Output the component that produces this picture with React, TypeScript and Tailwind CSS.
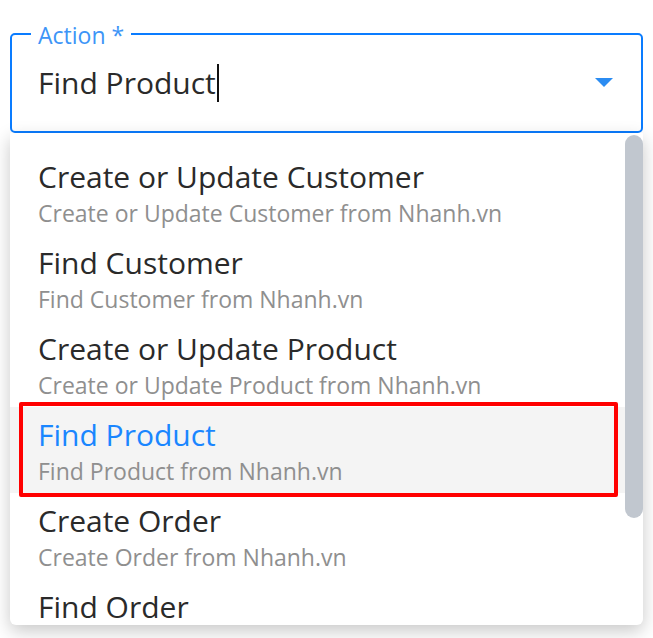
import React from 'react';

interface ActionOption {
  title: string;
  description: string;
}

const actions: ActionOption[] = [
  { title: 'Create or Update Customer', description: 'Create or Update Customer from Nhanh.vn' },
  { title: 'Find Customer', description: 'Find Customer from Nhanh.vn' },
  { title: 'Create or Update Product', description: 'Create or Update Product from Nhanh.vn' },
  { title: 'Find Product', description: 'Find Product from Nhanh.vn' },
  { title: 'Create Order', description: 'Create Order from Nhanh.vn' },
  { title: 'Find Order', description: 'Find Order from Nhanh.vn' },
];

const App: React.FC = () => {
  const selected = 'Find Product';

  return (
    <div className="min-h-[638px] bg-white px-[10px] pt-[33px] font-['Open_Sans',sans-serif]">
      {/* outlined select */}
      <div className="relative flex h-[100px] items-center rounded-[5px] border-2 border-[#0a7cff] pl-[26px] pr-[28px]">
        <span className="absolute -top-[12px] left-[19px] bg-white px-[7px] text-[23px] leading-[24px] text-[#3d95f7]">
          Action *
        </span>
        <div className="flex flex-1 items-center text-[30px] leading-[38px] text-[#2a2a2a]">
          <span>{selected}</span>
          <span className="ml-[1px] h-[38px] w-[2px] bg-[#111]" />
        </div>
        <svg width="18" height="10" viewBox="0 0 18 10">
          <path d="M0 0 L18 0 L9 9 Z" fill="#2b8cf2" />
        </svg>
      </div>

      {/* dropdown list */}
      <div className="relative z-10 flex h-[492px] overflow-hidden rounded-b-[6px] bg-white shadow-[0_6px_18px_rgba(0,0,0,0.22)]">
        <div className="flex-1 pt-4">
          {actions.map(a => {
            const active = a.title === selected;
            return (
              <div
                key={a.title}
                className={`relative h-[86px] pl-[28px] pt-[9px] ${active ? 'bg-[#f4f4f4]' : ''}`}
              >
                <div className={`text-[30px] leading-[38px] ${active ? 'text-[#1a86ff]' : 'text-[#2a2a2a]'}`}>
                  {a.title}
                </div>
                <div className="mt-[2px] text-[23px] leading-[30px] text-[#8f8f8f]">{a.description}</div>
                {active && (
                  <div className="absolute -top-[5px] -bottom-[4px] left-[9px] right-[7px] rounded-[2px] border-4 border-[#ff0000]" />
                )}
              </div>
            );
          })}
        </div>
        <div className="w-[18px] pt-[2px]">
          <div className="h-[383px] rounded-full bg-[#c1c7cf]" />
        </div>
      </div>
    </div>
  );
};

export default App;
